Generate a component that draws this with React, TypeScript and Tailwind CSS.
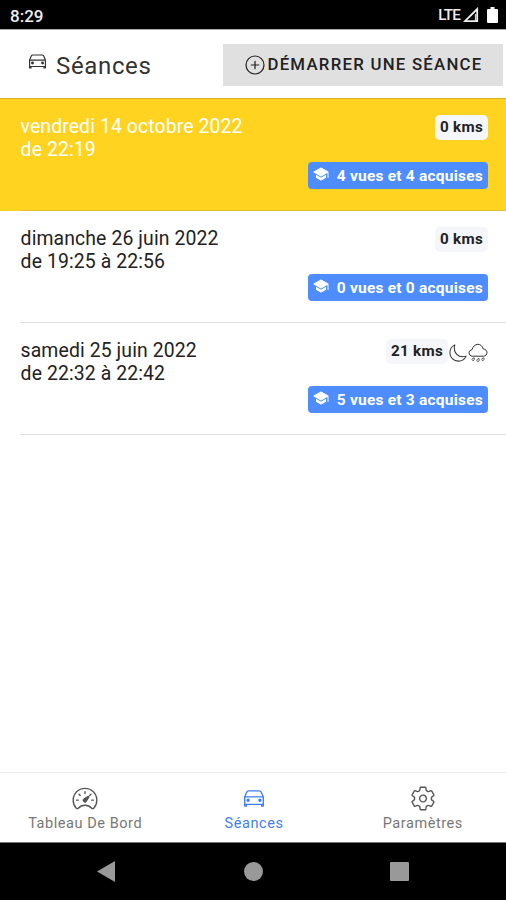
import React from "react";
import {
  IoAddCircleOutline,
  IoCarOutline,
  IoMoonOutline,
  IoSchool,
  IoSettingsOutline,
  IoSpeedometerOutline,
} from "react-icons/io5";

type Session = {
  date: string;
  time: string;
  kms: string;
  skills: string;
  active?: boolean;
  weather?: boolean;
};

const sessions: Session[] = [
  { date: "vendredi 14 octobre 2022", time: "de 22:19", kms: "0 kms", skills: "4 vues et 4 acquises", active: true },
  { date: "dimanche 26 juin 2022", time: "de 19:25 à 22:56", kms: "0 kms", skills: "0 vues et 0 acquises" },
  { date: "samedi 25 juin 2022", time: "de 22:32 à 22:42", kms: "21 kms", skills: "5 vues et 3 acquises", weather: true },
];

function RainCloud() {
  return (
    <svg className="h-5 w-5" viewBox="0 0 20 20" fill="none" stroke="#333" strokeWidth="1" strokeLinejoin="round">
      <path d="M4.6 13.2C2.3 13 1 11.6 1 9.8c0-1.7 1.3-2.8 3-3.1C4.8 3.8 7 1.3 9.8 1.3c2.7 0 4.7 2 5.4 4.6 2.3.3 3.8 1.7 3.8 3.7s-1.5 3.6-3.6 3.6z" />
      <path d="M6.2 14.8c.6 1.8 0 2.8-1.2 2.7-1.1-.1-1.3-1.2-.6-1.9zM15.8 14.8c.6 1.8 0 2.8-1.2 2.7-1.1-.1-1.3-1.2-.6-1.9zM11 15.4c.6 2 0 3.2-1.2 3.1-1.1-.1-1.3-1.3-.6-2.1z" strokeWidth=".8" />
    </svg>
  );
}

function SessionRow({ session }: { session: Session }) {
  return (
    <li className={`h-28 pl-5 ${session.active ? "bg-[#ffd31f] text-white" : "bg-white text-[#222]"}`}>
      <div className={`flex h-full justify-between border-b pr-[18px] ${session.active ? "border-[#e5bd31]" : "border-[#dedede]"}`}>
        <p className="pt-4 pl-[0.6px] text-[19.4px] leading-[23.3px] tracking-[0.11px] whitespace-nowrap">
          {session.date}
          <br />
          {session.time}
        </p>
        <div className="flex flex-col items-end pt-4">
          <div className="flex h-[25px] items-start">
            <span className="flex h-[25px] items-center rounded-[5px] bg-[#f5f6f9] px-[5px] text-[15.2px] font-bold tracking-[0.3px] text-[#222]">
              {session.kms}
            </span>
            {session.weather && (
              <span className="flex pt-1 text-[#333]">
                <IoMoonOutline className="h-5 w-5 [&_path]:[stroke-width:26px]" />
                <RainCloud />
              </span>
            )}
          </div>
          <span className="mt-[22px] flex h-[27px] w-[180px] items-center justify-between rounded-[4px] bg-[#4d8dff] px-[5px] pt-[2px] text-[15.5px] font-bold tracking-[0.22px] whitespace-nowrap text-white">
            <IoSchool className="mb-[5px] h-4 w-4" />
            {session.skills}
          </span>
        </div>
      </div>
    </li>
  );
}

function StatusBar() {
  return (
    <div className="flex h-[29px] shrink-0 items-center justify-between bg-black pr-[8px] pl-[10px] text-[#eee]">
      <span className="pt-[5px] text-[17px] font-medium">8:29</span>
      <div className="flex items-center pt-[2px]">
        <span className="text-[15.2px] font-medium tracking-[-0.8px]">LTE</span>
        <svg className="ml-[3px] h-4 w-4" viewBox="0 0 16 16" fill="none" stroke="currentColor" strokeWidth="1.8">
          <path d="M2 14.2 14.2 2v12.2z" />
          <path d="M12.4 7v7" strokeWidth="1" />
        </svg>
        <svg className="ml-2 h-[18px] w-[11px]" viewBox="0 0 11 18" fill="white">
          <path d="M3.5 1h4v2H10q1 0 1 1v12q0 1-1 1H1q-1 0-1-1V4q0-1 1-1h2.5z" />
        </svg>
      </div>
    </div>
  );
}

export default function App() {
  return (
    <div className="flex h-[900px] w-[506px] flex-col overflow-hidden bg-white font-[Roboto,sans-serif]">
      <StatusBar />
      <header className="flex h-[70px] shrink-0 items-center justify-between border-t border-b border-t-[#aaa] border-b-[#d8b326] bg-white pt-px pr-[3px] pl-[26px]">
        <h1 className="flex items-center text-[24px] tracking-[0.65px] text-[#333]">
          <IoCarOutline className="mr-[7px] mb-[7px] h-[23px] w-[23px] [&_path]:[stroke-width:26px]" />
          <span className="pt-[2px] font-normal">Séances</span>
        </h1>
        <button className="flex h-[42px] w-[280px] items-center justify-center bg-[#e0e0e0] text-[16.8px] font-medium tracking-[1.25px] whitespace-nowrap text-[#222]">
          <IoAddCircleOutline className="h-6 w-6 shrink-0 [&_path]:[stroke-width:26px]" />
          DÉMARRER UNE SÉANCE
        </button>
      </header>
      <ul className="flex-1 bg-white">
        {sessions.map((session) => (
          <SessionRow key={session.date} session={session} />
        ))}
      </ul>
      <nav className="grid h-[70px] shrink-0 grid-cols-3 border-t border-[#ededed] bg-white pl-px text-[14.5px] tracking-[0.56px] text-[#777] [&_path]:[stroke-width:26px]">
        <div className="flex flex-col items-center pt-3">
          <IoSpeedometerOutline className="h-[27px] w-7 text-[#555]" />
          <span className="pt-[2px] leading-5">Tableau De Bord</span>
        </div>
        <div className="flex flex-col items-center pt-3 pl-px text-[#3f7df5]">
          <IoCarOutline className="h-[27px] w-7" />
          <span className="pt-[2px] leading-5">Séances</span>
        </div>
        <div className="flex flex-col items-center pt-3 pl-[2px]">
          <IoSettingsOutline className="h-[27px] w-7 text-[#555]" />
          <span className="pt-[2px] leading-5">Paramètres</span>
        </div>
      </nav>
      <div className="flex h-[58px] shrink-0 items-center justify-between border-t border-[#777] bg-black px-[97px] text-[#999]">
        <svg className="h-[21px] w-[18px]" viewBox="0 0 18 21" fill="currentColor"><path d="M0 10.5 18 0v21z" /></svg>
        <span className="ml-px h-[19px] w-[19px] rounded-full bg-[#999]" />
        <span className="h-[19px] w-[19px] rounded-[1px] bg-[#999]" />
      </div>
    </div>
  );
}
